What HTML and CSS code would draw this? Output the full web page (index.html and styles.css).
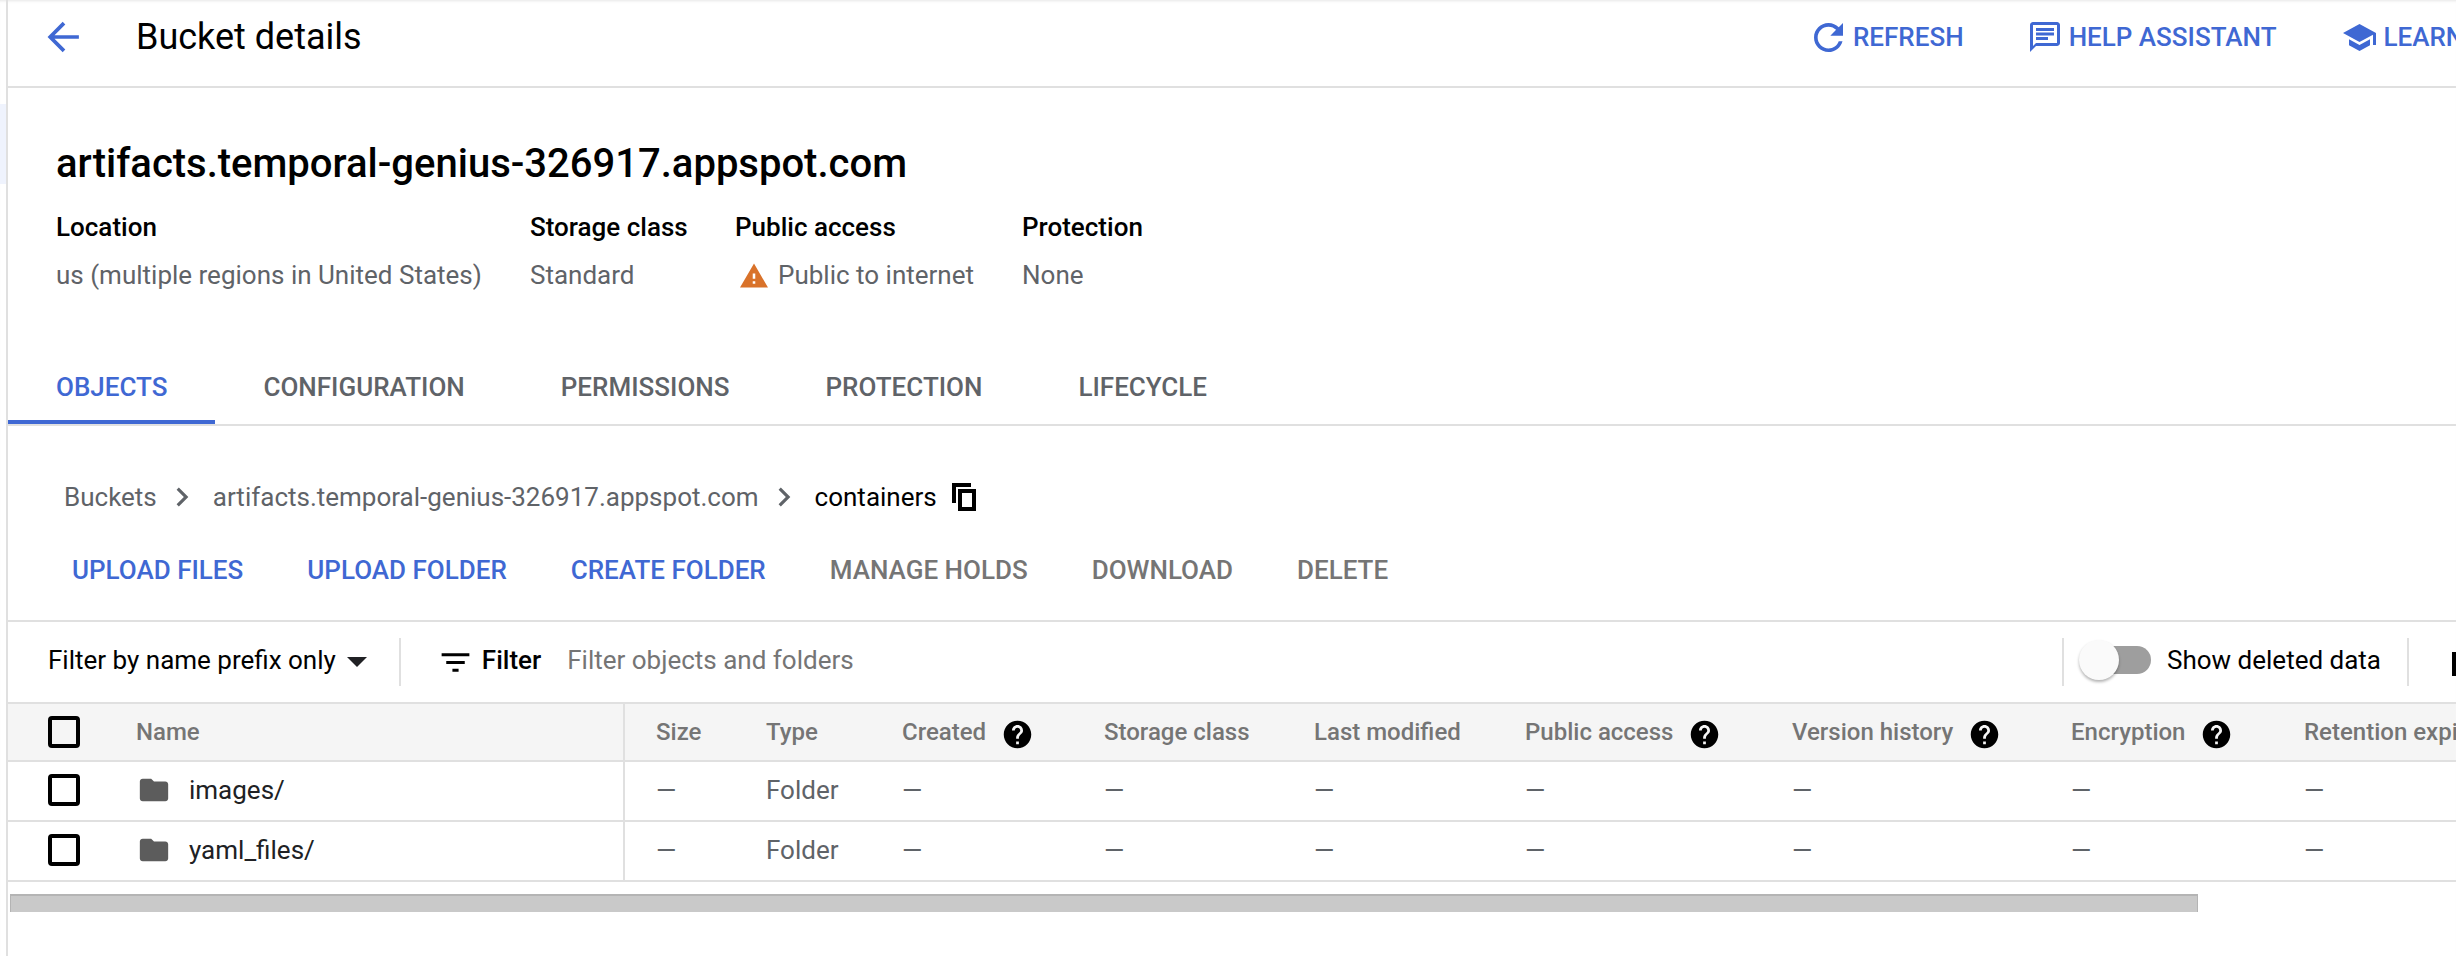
FILE: index.html
```html
<!DOCTYPE html>
<html lang="en">
<head>
<meta charset="utf-8">
<title>Bucket details</title>
<link rel="stylesheet" href="styles.css">
</head>
<body>
<div class="page">
  <aside class="rail"><div class="rail-tint"></div></aside>
  <main class="main">
    <header class="topbar">
      <svg class="back" viewBox="0 0 32 32"><path d="M30 16H4M16 3 3 16l13 13" fill="none" stroke="currentColor" stroke-width="3.5"/></svg>
      <h1 class="page-title">Bucket details</h1>
      <div class="top-actions">
        <a class="top-btn"><svg class="ico-refresh" viewBox="4 4 16 16"><path d="M17.65 6.35C16.2 4.9 14.21 4 12 4c-4.42 0-7.99 3.58-7.99 8s3.57 8 7.99 8c3.73 0 6.84-2.55 7.73-6h-2.08c-.82 2.33-3.04 4-5.65 4-3.31 0-6-2.69-6-6s2.69-6 6-6c1.66 0 3.14.69 4.22 1.78L13 11h7V4l-2.35 2.35z"/></svg>REFRESH</a>
        <a class="top-btn"><svg class="ico-help" viewBox="2 2 20 20"><path d="M20 2H4c-1.1 0-2 .9-2 2v18l4-4h14c1.1 0 2-.9 2-2V4c0-1.1-.9-2-2-2zm0 14H6l-2 2V4h16v12zM6 12h8v2H6zm0-3h12v2H6zm0-3h12v2H6z"/></svg>HELP ASSISTANT</a>
        <a class="top-btn"><svg class="ico-learn" viewBox="1 3 22 18"><path d="M5 13.18v4L12 21l7-3.82v-4L12 17l-7-3.82zM12 3 1 9l11 6 9-4.91V17h2V9L12 3z"/></svg>LEARN</a>
      </div>
    </header>

    <section class="summary">
      <h2 class="bucket-name">artifacts.temporal-genius-326917.appspot.com</h2>
      <div class="meta">
        <div class="meta-col m-loc"><div class="meta-label">Location</div><div class="meta-value">us (multiple regions in United States)</div></div>
        <div class="meta-col m-sto"><div class="meta-label">Storage class</div><div class="meta-value">Standard</div></div>
        <div class="meta-col m-pub"><div class="meta-label">Public access</div><div class="meta-value warn"><svg class="warn-ico" viewBox="1 2 22 19"><path d="M1 21h22L12 2 1 21zm12-3h-2v-2h2v2zm0-4h-2v-4h2v4z"/></svg>Public to internet</div></div>
        <div class="meta-col"><div class="meta-label">Protection</div><div class="meta-value">None</div></div>
      </div>
    </section>

    <nav class="tabs">
      <a class="tab active">OBJECTS</a>
      <a class="tab">CONFIGURATION</a>
      <a class="tab">PERMISSIONS</a>
      <a class="tab">PROTECTION</a>
      <a class="tab">LIFECYCLE</a>
    </nav>

    <div class="crumbs">
      <span>Buckets</span>
      <svg class="chev" viewBox="0 0 24 24"><path d="M10 6 8.59 7.41 13.17 12l-4.58 4.59L10 18l6-6z"/></svg>
      <span>artifacts.temporal-genius-326917.appspot.com</span>
      <svg class="chev" viewBox="0 0 24 24"><path d="M10 6 8.59 7.41 13.17 12l-4.58 4.59L10 18l6-6z"/></svg>
      <span class="crumb-current">containers</span>
      <svg class="copy" viewBox="0 0 24 28"><path d="M2 20V2h17M8 8h14v18H8z" fill="none" stroke="#000" stroke-width="4"/></svg>
    </div>

    <div class="actions">
      <a class="act on">UPLOAD FILES</a>
      <a class="act on">UPLOAD FOLDER</a>
      <a class="act on">CREATE FOLDER</a>
      <a class="act">MANAGE HOLDS</a>
      <a class="act">DOWNLOAD</a>
      <a class="act">DELETE</a>
    </div>

    <div class="filterbar">
      <div class="prefix lift">Filter by name prefix only<span class="caret"></span></div>
      <div class="fsep"></div>
      <svg class="filter-ico" viewBox="0 0 24 24"><path d="M10 18h4v-2h-4v2zM3 6v2h18V6H3zm3 7h12v-2H6v2z"/></svg>
      <span class="filter-label lift">Filter</span>
      <span class="filter-ph lift">Filter objects and folders</span>
      <div class="fsep push"></div>
      <div class="toggle lift"><span class="track"></span><span class="thumb"></span></div>
      <span class="toggle-label lift">Show deleted data</span>
      <div class="fsep sep-r"></div>
      <span class="density"></span>
    </div>

    <div class="table">
      <div class="row head">
        <div class="c c-check"><span class="box"></span></div>
        <div class="c c-name">Name</div>
        <div class="c c-size">Size</div>
        <div class="c">Type</div>
        <div class="c">Created<svg class="help" viewBox="0 0 24 24"><path d="M12 2C6.48 2 2 6.48 2 12s4.480 10 10 10 10-4.480 10-10S17.520 2 12 2zm1 17h-2v-2h2v2zm2.070-7.750-.9.92C13.450 12.900 13 13.500 13 15h-2v-.5c0-1.100.45-2.100 1.170-2.830l1.240-1.260c.37-.36.59-.86.59-1.410 0-1.100-.9-2-2-2s-2 .9-2 2H8c0-2.210 1.790-4 4-4s4 1.790 4 4c0 .88-.36 1.680-.93 2.250z"/></svg></div>
        <div class="c">Storage class</div>
        <div class="c">Last modified</div>
        <div class="c">Public access<svg class="help" viewBox="0 0 24 24"><path d="M12 2C6.48 2 2 6.48 2 12s4.480 10 10 10 10-4.480 10-10S17.520 2 12 2zm1 17h-2v-2h2v2zm2.070-7.750-.9.92C13.450 12.900 13 13.500 13 15h-2v-.5c0-1.100.45-2.100 1.170-2.830l1.240-1.260c.37-.36.59-.86.59-1.410 0-1.100-.9-2-2-2s-2 .9-2 2H8c0-2.210 1.790-4 4-4s4 1.790 4 4c0 .88-.36 1.680-.93 2.250z"/></svg></div>
        <div class="c">Version history<svg class="help" viewBox="0 0 24 24"><path d="M12 2C6.48 2 2 6.48 2 12s4.480 10 10 10 10-4.480 10-10S17.520 2 12 2zm1 17h-2v-2h2v2zm2.070-7.750-.9.92C13.450 12.900 13 13.500 13 15h-2v-.5c0-1.100.45-2.100 1.170-2.830l1.240-1.260c.37-.36.59-.86.59-1.410 0-1.100-.9-2-2-2s-2 .9-2 2H8c0-2.210 1.790-4 4-4s4 1.790 4 4c0 .88-.36 1.680-.93 2.250z"/></svg></div>
        <div class="c">Encryption<svg class="help" viewBox="0 0 24 24"><path d="M12 2C6.48 2 2 6.48 2 12s4.480 10 10 10 10-4.480 10-10S17.520 2 12 2zm1 17h-2v-2h2v2zm2.070-7.750-.9.92C13.450 12.900 13 13.500 13 15h-2v-.5c0-1.100.45-2.100 1.170-2.830l1.240-1.260c.37-.36.59-.86.59-1.410 0-1.100-.9-2-2-2s-2 .9-2 2H8c0-2.210 1.790-4 4-4s4 1.790 4 4c0 .88-.36 1.680-.93 2.250z"/></svg></div>
        <div class="c">Retention expiration date</div>
      </div>
      <div class="row body-row">
        <div class="c c-check"><span class="box"></span></div>
        <div class="c c-name"><svg class="folder" viewBox="0 0 24 24"><path d="M10 4H4c-1.100 0-2 .9-2 2v12c0 1.100.9 2 2 2h16c1.100 0 2-.9 2-2V8c0-1.100-.9-2-2-2h-8l-2-2z"/></svg><span class="fname">images/</span></div>
        <div class="c c-size">—</div><div class="c">Folder</div><div class="c">—</div><div class="c">—</div><div class="c">—</div><div class="c">—</div><div class="c">—</div><div class="c">—</div><div class="c">—</div>
      </div>
      <div class="row body-row">
        <div class="c c-check"><span class="box"></span></div>
        <div class="c c-name"><svg class="folder" viewBox="0 0 24 24"><path d="M10 4H4c-1.100 0-2 .9-2 2v12c0 1.100.9 2 2 2h16c1.100 0 2-.9 2-2V8c0-1.100-.9-2-2-2h-8l-2-2z"/></svg><span class="fname">yaml_files/</span></div>
        <div class="c c-size">—</div><div class="c">Folder</div><div class="c">—</div><div class="c">—</div><div class="c">—</div><div class="c">—</div><div class="c">—</div><div class="c">—</div><div class="c">—</div>
      </div>
    </div>
    <div class="hscroll"><div class="hthumb"></div></div>
  </main>
</div>
</body>
</html>
```

FILE: styles.css
```css
* { box-sizing: border-box; }
html, body { margin: 0; height: 100%; background: #fff; overflow: hidden; }
body { font-family: Roboto, "Liberation Sans", sans-serif; font-size: 26px; color: #202124; }
a { display: block; }
h1, h2 { margin: 0; font-weight: 400; }

.page { display: flex; width: 2456px; height: 956px; overflow: hidden; box-shadow: inset 0 3px 3px -2px #e6e6e6; }
.rail { flex: 0 0 8px; border-right: 2px solid #e0e0e0; padding-top: 104px; }
.rail-tint { width: 6px; height: 80px; background: #eff3fd; }
.main { flex: 1 1 auto; min-width: 0; overflow: hidden; }

.topbar { display: flex; align-items: center; height: 88px; border-bottom: 2px solid #e0e0e0; padding-bottom: 12px; white-space: nowrap; }
.back { width: 34px; height: 34px; margin-left: 39px; color: #3f68d3; flex: none; }
.page-title { margin-left: 55px; font-size: 36px; color: #000; }
.top-actions { margin-left: auto; display: flex; align-items: center; flex: none; width: 642px; }
.top-btn { display: flex; align-items: center; flex: none; font-size: 26px; font-weight: 500; color: #3f68d3; margin-right: 66px; }
.ico-refresh { width: 29px; height: 29px; fill: currentColor; margin-right: 10px; flex: none; }
.ico-help { width: 30px; height: 30px; fill: currentColor; margin-right: 9px; flex: none; }
.ico-learn { width: 33px; height: 27px; fill: currentColor; margin-right: 8px; flex: none; }

.summary { padding: 51px 0 0 48px; }
.bucket-name { font-size: 40px; font-weight: 500; line-height: 50px; color: #000; white-space: nowrap; }
.meta { display: flex; margin-top: 22px; line-height: 32px; }
.meta-col { flex: none; }
.m-loc { width: 474px; }
.m-sto { width: 205px; }
.m-pub { width: 287px; }
.meta-label { font-weight: 500; color: #000; }
.meta-value { margin-top: 16px; color: #5f6368; white-space: nowrap; }
.warn { display: flex; align-items: center; }
.warn-ico { width: 28px; height: 25px; fill: #d9722a; margin: 0 10px 0 5px; }

.tabs { display: flex; height: 66px; margin-top: 69px; border-bottom: 2px solid #e0e0e0; }
.tab { height: 64px; padding: 0 48px; line-height: 54px; font-size: 26px; font-weight: 500; color: #5f6368; }
.tab.active { color: #3f68d3; border-bottom: 4px solid #3f68d3; }

.crumbs { display: flex; align-items: center; height: 32px; margin: 55px 0 0 56px; color: #5f6368; white-space: nowrap; }
.chev { width: 38px; height: 38px; fill: #5f6368; margin: 0 12px 0 6px; flex: none; }
.crumb-current { color: #000; }
.copy { width: 24px; height: 28px; margin-left: 15px; flex: none; }

.actions { display: flex; align-items: center; height: 32px; margin: 41px 0 0 64px; white-space: nowrap; }
.act { font-size: 26px; font-weight: 500; color: #757575; margin-right: 64px; }
.act.on { color: #3f68d3; }

.filterbar { display: flex; align-items: center; height: 82px; margin-top: 34px; border-top: 2px solid #e0e0e0; white-space: nowrap; color: #000; }
.lift { margin-bottom: 4px; }
.prefix { display: flex; align-items: center; margin-left: 40px; }
.caret { width: 0; height: 0; margin: 3px 0 0 11px; border: 10px solid transparent; border-top-color: #202124; border-bottom: 0; }
.fsep { width: 2px; height: 48px; background: #e0e0e0; margin-left: 32px; flex: none; }
.fsep.push { margin-left: auto; }
.fsep.sep-r { margin-left: 26px; }
.filter-ico { width: 37px; height: 37px; margin-left: 36px; fill: #000; flex: none; }
.filter-label { margin-left: 8px; font-weight: 500; }
.filter-ph { margin-left: 26px; color: #757575; }
.toggle { position: relative; width: 72px; height: 40px; margin-left: 15px; flex: none; }
.track { position: absolute; left: 8px; right: 0; top: 6px; height: 28px; border-radius: 14px; background: #9e9e9e; }
.thumb { position: absolute; left: 0; top: 0; width: 40px; height: 40px; border-radius: 50%; background: #fafafa; box-shadow: 0 2px 3px rgba(0,0,0,.3); }
.toggle-label { margin-left: 16px; }
.density { width: 4px; height: 24px; margin-left: 43px; margin-top: 4px; background: #000; flex: none; }

.row { display: grid; height: 60px; grid-template-columns: 128px 489px 141px 136px 202px 210px 211px 267px 279px 233px 400px; border-top: 2px solid #e0e0e0; color: #5f6368; white-space: nowrap; }
.row:last-child { border-bottom: 2px solid #e0e0e0; height: 62px; }
.head { height: 58px; background: #f5f5f5; font-weight: 500; color: #757575; font-size: 24px; }
.body-row .c { padding-bottom: 2px; }
.c { display: flex; align-items: center; min-width: 0; }
.c-check { padding-left: 40px; }
.c-name { border-right: 2px solid #e0e0e0; }
.c-size { padding-left: 31px; }
.box { width: 32px; height: 32px; border: 4px solid #000; border-radius: 4px; }
.folder { width: 34px; height: 34px; margin-left: 1px; fill: #5c5c5c; flex: none; }
.fname { margin-left: 18px; color: #202124; }
.help { width: 33px; height: 33px; margin: 4px 0 0 15px; fill: #000; flex: none; }

.hscroll { padding: 12px 0 0 2px; }
.hthumb { width: 2188px; height: 18px; background: #c9c9c9; border-top: 2px solid #b4b4b4; border-left: 1px solid #b4b4b4; border-right: 1px solid #b4b4b4; }
```
